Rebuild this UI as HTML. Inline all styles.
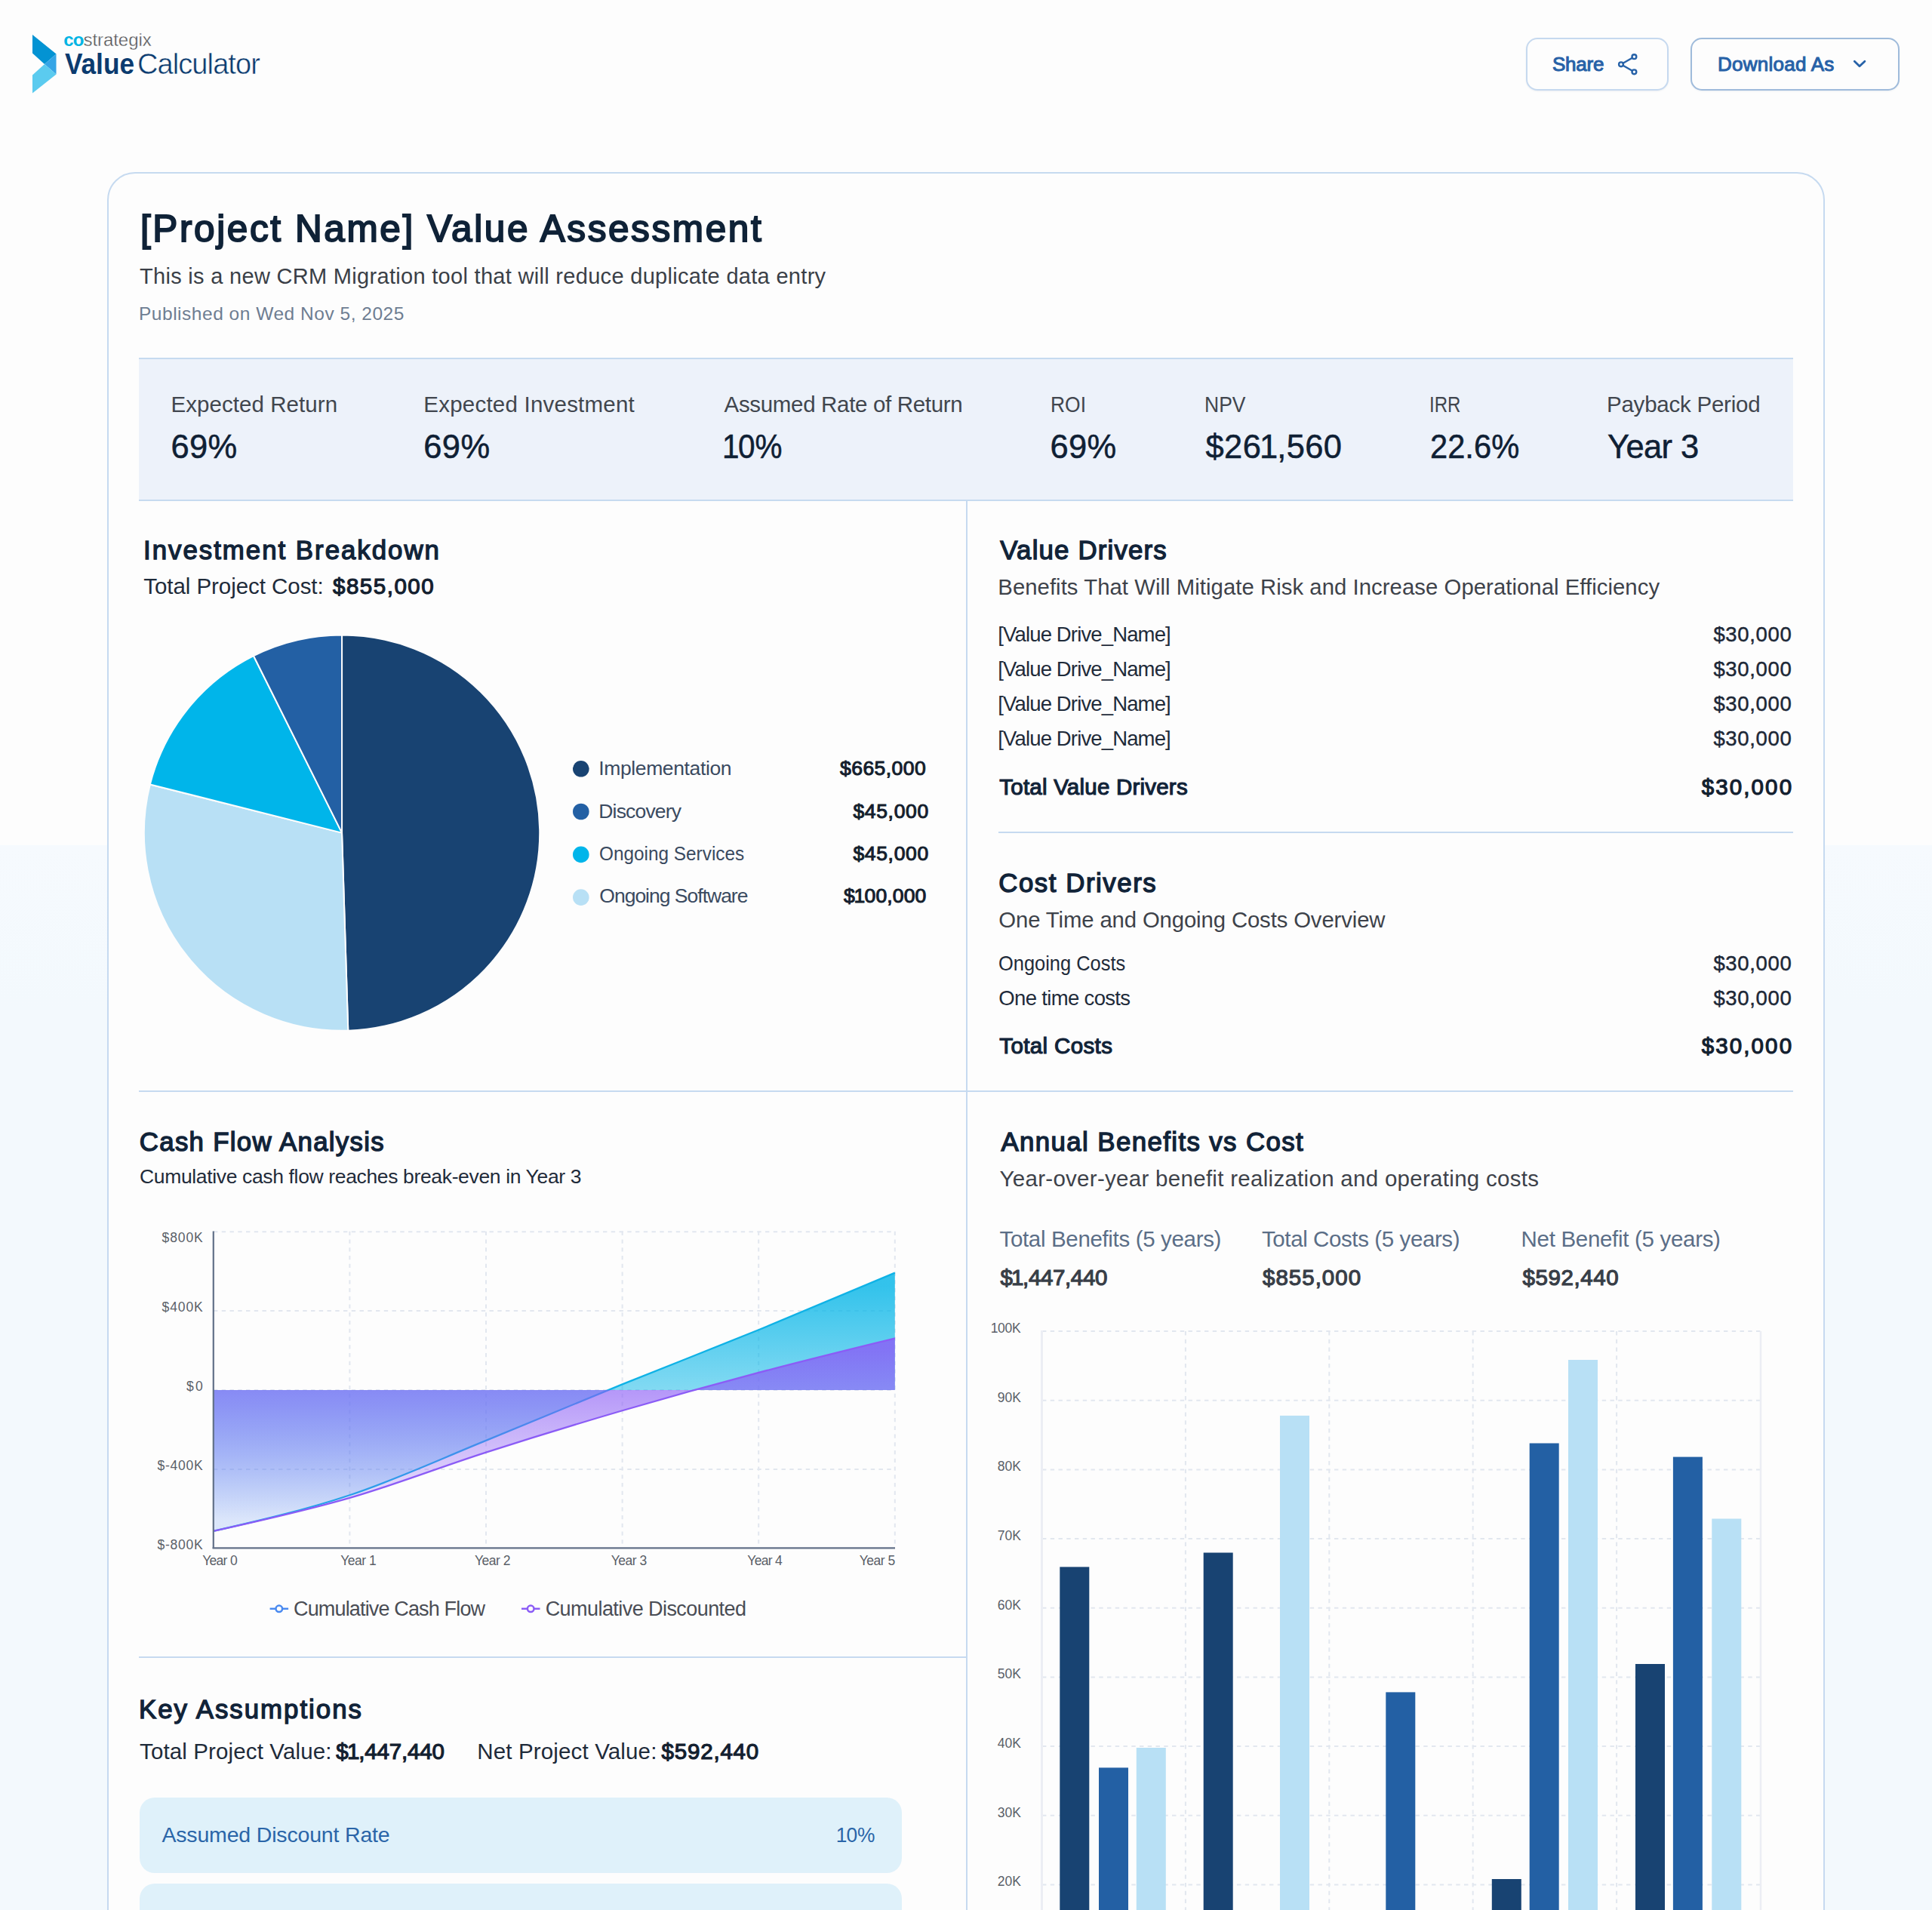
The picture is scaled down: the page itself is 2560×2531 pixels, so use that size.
<!DOCTYPE html>
<html><head><meta charset="utf-8"><title>Value Calculator</title>
<style>
html,body{margin:0;padding:0}
html{overflow:hidden;height:2531px;width:2560px}
body{width:2560px;height:2531px;overflow:hidden;position:relative;background:#fdfdfd;font-family:"Liberation Sans",sans-serif}
.bgl{position:absolute;left:0;top:1120px;width:2560px;height:1411px;background:linear-gradient(#f6fafe 0px,#f3f9fd 220px,#f3f9fd 100%)}
.page{position:relative;width:2560px;height:2531px;overflow:hidden}
.t{position:absolute;white-space:nowrap;line-height:1}
.abs{position:absolute}
.btn{position:absolute;box-sizing:border-box;border:2px solid #c6d9ef;border-radius:15px;background:#fdfdfd;box-shadow:0 1px 2px rgba(30,60,110,0.08)}
.card{position:absolute;left:142px;top:228px;width:2276px;height:2500px;box-sizing:border-box;border:2px solid #c6daf0;border-radius:37px;background:#fdfdfd}
.band{position:absolute;left:184px;top:474px;width:2192px;height:190px;box-sizing:border-box;background:#edf2fa;border-top:2px solid #c6daf0;border-bottom:2px solid #c6daf0}
.hl{position:absolute;height:2px;background:#c6daf0}
.vl{position:absolute;width:2px;background:#c6daf0}
.box{position:absolute;left:185px;width:1010px;border-radius:20px;background:#dff1fa}
svg{position:absolute;left:0;top:0;overflow:visible}
</style></head><body>
<div class="page">
<div class="bgl"></div>

<svg width="2560" height="2531" style="pointer-events:none">
<polygon points="43,46 74.5,71.5 59,85 43,70.5" fill="#0393d3"/>
<polygon points="74.5,71.5 74.5,98.5 59,85" fill="#35a5e6"/>
<polygon points="59,85 74.5,98.5 43,123.5 43,99.5" fill="#5bcbef"/>
</svg>
<div class="btn" style="left:2022px;top:50px;width:189px;height:70px"></div>
<div class="btn" style="left:2240px;top:50px;width:277px;height:70px;border-color:#9fbbdb"></div>
<svg width="2560" height="200">
<g fill="none" stroke="#2762a8" stroke-width="2.4" stroke-linecap="round">
<circle cx="2165.4" cy="75.2" r="2.9"/><circle cx="2148" cy="85.3" r="2.9"/><circle cx="2165.4" cy="95.3" r="2.9"/>
<line x1="2150.6" y1="83.8" x2="2162.8" y2="76.7"/><line x1="2150.6" y1="86.8" x2="2162.8" y2="93.8"/>
<polyline points="2457.3,81.3 2464,87.8 2470.9,81.3" stroke-width="2.8" stroke-linejoin="round"/>
</g></svg>
<div class="card"></div>
<div class="band"></div>
<div class="vl" style="left:1280px;top:664px;height:1900px"></div>
<div class="hl" style="left:184px;top:1445px;width:2192px"></div>
<div class="hl" style="left:1323px;top:1102px;width:1053px"></div>
<div class="hl" style="left:184px;top:2195px;width:1097px"></div>
<div class="box" style="top:2382px;height:100px"></div>
<div class="box" style="top:2496px;height:100px"></div>
<svg width="2560" height="2531"><path d="M453.05,1103.65L453.05,841.45A262.2,262.2 0 0 1 461.29,1365.72Z" fill="#184372" stroke="#fdfdfd" stroke-width="2" stroke-linejoin="round"/><path d="M453.05,1103.65L461.29,1365.72A262.2,262.2 0 0 1 198.83,1039.46Z" fill="#b8e0f5" stroke="#fdfdfd" stroke-width="2" stroke-linejoin="round"/><path d="M453.05,1103.65L198.83,1039.46A262.2,262.2 0 0 1 335.93,869.06Z" fill="#00b5ea" stroke="#fdfdfd" stroke-width="2" stroke-linejoin="round"/><path d="M453.05,1103.65L335.93,869.06A262.2,262.2 0 0 1 453.05,841.45Z" fill="#2360a4" stroke="#fdfdfd" stroke-width="2" stroke-linejoin="round"/><circle cx="769.8" cy="1018.8" r="10.8" fill="#184372"/><circle cx="769.8" cy="1075.5" r="10.8" fill="#2360a4"/><circle cx="769.8" cy="1132.4" r="10.8" fill="#00b5ea"/><circle cx="769.8" cy="1189.1" r="10.8" fill="#b8e0f5"/><g stroke="#e2e7ef" stroke-width="2" stroke-dasharray="5.4 5.35" fill="none"><line x1="283" y1="1632.2" x2="1186" y2="1632.2"/><line x1="283" y1="1737.1" x2="1186" y2="1737.1"/><line x1="283" y1="1842.0" x2="1186" y2="1842.0"/><line x1="283" y1="1946.9" x2="1186" y2="1946.9"/><line x1="463.4" y1="1631.7" x2="463.4" y2="2051"/><line x1="644.0" y1="1631.7" x2="644.0" y2="2051"/><line x1="824.6" y1="1631.7" x2="824.6" y2="2051"/><line x1="1005.2" y1="1631.7" x2="1005.2" y2="2051"/><line x1="1185.8" y1="1631.7" x2="1185.8" y2="2051"/></g><defs>
<linearGradient id="gc" x1="0" y1="0" x2="0" y2="1"><stop offset="5%" stop-color="#00b4e7" stop-opacity="0.8"/><stop offset="95%" stop-color="#00b4e7" stop-opacity="0.1"/></linearGradient>
<linearGradient id="gd" x1="0" y1="0" x2="0" y2="1"><stop offset="5%" stop-color="#8b5cf6" stop-opacity="0.8"/><stop offset="95%" stop-color="#8b5cf6" stop-opacity="0.1"/></linearGradient>
</defs><path d="M282.80,2028.95C343.00,2015.10,403.20,2001.24,463.40,1981.23C523.60,1961.21,583.80,1933.33,644.00,1908.86C704.20,1884.39,764.40,1858.82,824.60,1834.40C884.80,1809.97,945.00,1786.91,1005.20,1762.29C1065.40,1737.67,1125.60,1712.17,1185.80,1686.66L1185.80,1842.00L282.80,1842.00Z" fill="url(#gc)"/><path d="M282.80,2028.95C343.00,2015.10,403.20,2001.24,463.40,1981.23C523.60,1961.21,583.80,1933.33,644.00,1908.86C704.20,1884.39,764.40,1858.82,824.60,1834.40C884.80,1809.97,945.00,1786.91,1005.20,1762.29C1065.40,1737.67,1125.60,1712.17,1185.80,1686.66" fill="none" stroke="#0fb2e6" stroke-width="2.3"/><path d="M282.80,2028.95C343.00,2015.62,403.20,2002.29,463.40,1984.90C523.60,1967.51,583.80,1943.86,644.00,1924.59C704.20,1905.32,764.40,1886.88,824.60,1869.27C884.80,1851.66,945.00,1834.90,1005.20,1818.93C1065.40,1802.95,1125.60,1788.19,1185.80,1773.42L1185.80,1842.00L282.80,1842.00Z" fill="url(#gd)"/><path d="M282.80,2028.95C343.00,2015.62,403.20,2002.29,463.40,1984.90C523.60,1967.51,583.80,1943.86,644.00,1924.59C704.20,1905.32,764.40,1886.88,824.60,1869.27C884.80,1851.66,945.00,1834.90,1005.20,1818.93C1065.40,1802.95,1125.60,1788.19,1185.80,1773.42" fill="none" stroke="#8b5cf6" stroke-width="2.3"/><line x1="282.8" y1="1631.5" x2="282.8" y2="2052" stroke="#627188" stroke-width="2.2"/><line x1="281.6" y1="2051.3" x2="1186" y2="2051.3" stroke="#627188" stroke-width="2.2"/><line x1="357.6" y1="2131.8" x2="382.1" y2="2131.8" stroke="#4a8af0" stroke-width="2.5"/><circle cx="369.8" cy="2131.8" r="4.3" fill="#fdfdfd" stroke="#4a8af0" stroke-width="2.5"/><line x1="691" y1="2131.8" x2="715.5" y2="2131.8" stroke="#8b5cf6" stroke-width="2.5"/><circle cx="703.2" cy="2131.8" r="4.3" fill="#fdfdfd" stroke="#8b5cf6" stroke-width="2.5"/><g stroke="#e2e7ef" stroke-width="2" stroke-dasharray="5.4 5.35" fill="none"><line x1="1381" y1="1764.1" x2="2332.5" y2="1764.1"/><line x1="1381" y1="1855.8" x2="2332.5" y2="1855.8"/><line x1="1381" y1="1947.4" x2="2332.5" y2="1947.4"/><line x1="1381" y1="2039.1" x2="2332.5" y2="2039.1"/><line x1="1381" y1="2130.8" x2="2332.5" y2="2130.8"/><line x1="1381" y1="2222.5" x2="2332.5" y2="2222.5"/><line x1="1381" y1="2314.1" x2="2332.5" y2="2314.1"/><line x1="1381" y1="2405.8" x2="2332.5" y2="2405.8"/><line x1="1381" y1="2497.5" x2="2332.5" y2="2497.5"/><line x1="1570.9" y1="1764" x2="1570.9" y2="2531"/><line x1="1761.3" y1="1764" x2="1761.3" y2="2531"/><line x1="1951.7" y1="1764" x2="1951.7" y2="2531"/><line x1="2142.1" y1="1764" x2="2142.1" y2="2531"/></g><line x1="2333" y1="1764" x2="2333" y2="2531" stroke="#eceef4" stroke-width="2.5"/><line x1="1380.5" y1="1763" x2="1380.5" y2="2531" stroke="#eceef4" stroke-width="3"/><rect x="1404.3" y="2076.4" width="39" height="454.6" fill="#184372"/><rect x="1456.0" y="2342.4" width="39" height="188.6" fill="#2360a4"/><rect x="1505.8" y="2316.0" width="39" height="215.0" fill="#b8e0f5"/><rect x="1594.7" y="2057.5" width="39" height="473.5" fill="#184372"/><rect x="1696.0" y="1875.9" width="39" height="655.1" fill="#b8e0f5"/><rect x="1836.3" y="2242.4" width="39" height="288.6" fill="#2360a4"/><rect x="1976.8" y="2490.0" width="39" height="41.0" fill="#184372"/><rect x="2026.7" y="1912.5" width="39" height="618.5" fill="#2360a4"/><rect x="2078.0" y="1802.0" width="39" height="729.0" fill="#b8e0f5"/><rect x="2167.0" y="2205.0" width="39" height="326.0" fill="#184372"/><rect x="2216.9" y="1930.6" width="39" height="600.4" fill="#2360a4"/><rect x="2268.3" y="2012.5" width="39" height="518.5" fill="#b8e0f5"/></svg>
<div class="t" style="left:84.2px;top:40.6px;font-size:24px;font-weight:700;color:#00b4e4;letter-spacing:-0.8px">co</div>
<div class="t" style="left:110.5px;top:40.6px;font-size:24px;font-weight:400;color:#555558;letter-spacing:-0.062px;-webkit-text-stroke:0.35px #fdfdfd">strategix</div>
<div class="t" style="left:85.6px;top:65.7px;font-size:38px;font-weight:700;color:#0b3b6f;letter-spacing:0.0px;transform:scaleX(0.9265);transform-origin:0 0">Value</div>
<div class="t" style="left:182.0px;top:65.7px;font-size:38px;font-weight:400;color:#0b3b6f;letter-spacing:-0.911px;-webkit-text-stroke:0.5px #fdfdfd">Calculator</div>
<div class="t" style="left:2057.0px;top:72.4px;font-size:26px;font-weight:400;color:#2761a7;letter-spacing:-0.25px;-webkit-text-stroke:1.04px #2761a7">Share</div>
<div class="t" style="left:2276.0px;top:72.4px;font-size:26px;font-weight:400;color:#2761a7;letter-spacing:0.25px;-webkit-text-stroke:1.04px #2761a7">Download As</div>
<div class="t" style="left:186.0px;top:278.32px;font-size:49.5px;font-weight:400;color:#0f2237;letter-spacing:2.6px;-webkit-text-stroke:1.98px #0f2237">[Project Name] Value Assessment</div>
<div class="t" style="left:185.0px;top:352.15px;font-size:29px;font-weight:400;color:#3a3f47;letter-spacing:0.304px">This is a new CRM Migration tool that will reduce duplicate data entry</div>
<div class="t" style="left:184.0px;top:403.88px;font-size:24.5px;font-weight:400;color:#6e7d92;letter-spacing:0.519px">Published on Wed Nov 5, 2025</div>
<div class="t" style="left:226.4px;top:520.92px;font-size:29.5px;font-weight:400;color:#41464e;letter-spacing:0.071px">Expected Return</div>
<div class="t" style="left:226.4px;top:571.32px;font-size:43.5px;font-weight:400;color:#0f2034;letter-spacing:0.3px;-webkit-text-stroke:0.5px #0f2034">69%</div>
<div class="t" style="left:561.3px;top:520.92px;font-size:29.5px;font-weight:400;color:#41464e;letter-spacing:0.222px">Expected Investment</div>
<div class="t" style="left:561.3px;top:571.32px;font-size:43.5px;font-weight:400;color:#0f2034;letter-spacing:0.35px;-webkit-text-stroke:0.5px #0f2034">69%</div>
<div class="t" style="left:959.6px;top:520.92px;font-size:29.5px;font-weight:400;color:#41464e;letter-spacing:-0.333px">Assumed Rate of Return</div>
<div class="t" style="left:958.67px;top:571.32px;font-size:43.5px;font-weight:400;color:#0f2034;letter-spacing:0.0px;-webkit-text-stroke:0.5px #0f2034;transform:scaleX(0.9296);transform-origin:0 0"><span style="margin:0 -0.035em 0 -0.05em">1</span>0%</div>
<div class="t" style="left:1391.71px;top:520.92px;font-size:29.5px;font-weight:400;color:#41464e;letter-spacing:0.0px;transform:scaleX(0.8958);transform-origin:0 0">ROI</div>
<div class="t" style="left:1391.5px;top:571.32px;font-size:43.5px;font-weight:400;color:#0f2034;letter-spacing:0.35px;-webkit-text-stroke:0.5px #0f2034">69%</div>
<div class="t" style="left:1595.7px;top:520.92px;font-size:29.5px;font-weight:400;color:#41464e;letter-spacing:0.0px;transform:scaleX(0.8983);transform-origin:0 0">NPV</div>
<div class="t" style="left:1597.5px;top:571.32px;font-size:43.5px;font-weight:400;color:#0f2034;letter-spacing:0.386px;-webkit-text-stroke:0.5px #0f2034">$26<span style="margin:0 -0.035em 0 -0.05em">1</span>,560</div>
<div class="t" style="left:1894.35px;top:520.92px;font-size:29.5px;font-weight:400;color:#41464e;letter-spacing:0.0px;transform:scaleX(0.8152);transform-origin:0 0">IRR</div>
<div class="t" style="left:1894.88px;top:571.32px;font-size:43.5px;font-weight:400;color:#0f2034;letter-spacing:0.0px;-webkit-text-stroke:0.5px #0f2034;transform:scaleX(0.9583);transform-origin:0 0">22.6%</div>
<div class="t" style="left:2129.0px;top:520.92px;font-size:29.5px;font-weight:400;color:#41464e;letter-spacing:-0.231px">Payback Period</div>
<div class="t" style="left:2130.0px;top:571.32px;font-size:43.5px;font-weight:400;color:#0f2034;letter-spacing:-0.6px;-webkit-text-stroke:0.5px #0f2034">Year 3</div>
<div class="t" style="left:190.0px;top:712.12px;font-size:34.8px;font-weight:400;color:#112338;letter-spacing:2.0px;-webkit-text-stroke:1.39px #112338">Investment Breakdown</div>
<div class="t" style="left:190.3px;top:762.32px;font-size:29.5px;font-weight:400;color:#1f2b3a;letter-spacing:-0.056px">Total Project Cost:</div>
<div class="t" style="left:441.0px;top:762.32px;font-size:29.5px;font-weight:400;color:#13202f;letter-spacing:1.514px;-webkit-text-stroke:1.18px #13202f">$855,000</div>
<div class="t" style="left:793.3px;top:1004.77px;font-size:26.5px;font-weight:400;color:#3a4a60;letter-spacing:-0.385px">Implementation</div>
<div class="t" style="left:1113.1px;top:1004.77px;font-size:26.5px;font-weight:400;color:#141e2d;letter-spacing:0.429px;-webkit-text-stroke:1.06px #141e2d">$665,000</div>
<div class="t" style="left:793.3px;top:1061.77px;font-size:26.5px;font-weight:400;color:#3a4a60;letter-spacing:-0.825px">Discovery</div>
<div class="t" style="left:1130.4px;top:1061.77px;font-size:26.5px;font-weight:400;color:#141e2d;letter-spacing:0.667px;-webkit-text-stroke:1.06px #141e2d">$45,000</div>
<div class="t" style="left:794.38px;top:1118.17px;font-size:26.5px;font-weight:400;color:#3a4a60;letter-spacing:0.0px;transform:scaleX(0.9188);transform-origin:0 0">Ongoing Services</div>
<div class="t" style="left:1130.4px;top:1118.17px;font-size:26.5px;font-weight:400;color:#141e2d;letter-spacing:0.667px;-webkit-text-stroke:1.06px #141e2d">$45,000</div>
<div class="t" style="left:794.3px;top:1174.38px;font-size:26.5px;font-weight:400;color:#3a4a60;letter-spacing:-1.0px">Ongoing Software</div>
<div class="t" style="left:1118.0px;top:1174.38px;font-size:26.5px;font-weight:400;color:#141e2d;letter-spacing:0.143px;-webkit-text-stroke:1.06px #141e2d">$<span style="margin:0 -0.035em 0 -0.05em">1</span>00,000</div>
<div class="t" style="left:1325.3px;top:711.82px;font-size:34.8px;font-weight:400;color:#112338;letter-spacing:1.183px;-webkit-text-stroke:1.39px #112338">Value Drivers</div>
<div class="t" style="left:1322.3px;top:763.0px;font-size:29.3px;font-weight:400;color:#3d424a;letter-spacing:0.051px">Benefits That Will Mitigate Risk and Increase Operational Efficiency</div>
<div class="t" style="left:1322.3px;top:826.92px;font-size:27.5px;font-weight:400;color:#1f2b3a;letter-spacing:-0.859px">[Value Drive_Name]</div>
<div class="t" style="left:2270.4px;top:826.92px;font-size:27.5px;font-weight:400;color:#1c2736;letter-spacing:0.667px;-webkit-text-stroke:0.45px #1c2736">$30,000</div>
<div class="t" style="left:1322.3px;top:872.92px;font-size:27.5px;font-weight:400;color:#1f2b3a;letter-spacing:-0.859px">[Value Drive_Name]</div>
<div class="t" style="left:2270.4px;top:872.92px;font-size:27.5px;font-weight:400;color:#1c2736;letter-spacing:0.667px;-webkit-text-stroke:0.45px #1c2736">$30,000</div>
<div class="t" style="left:1322.3px;top:918.92px;font-size:27.5px;font-weight:400;color:#1f2b3a;letter-spacing:-0.859px">[Value Drive_Name]</div>
<div class="t" style="left:2270.4px;top:918.92px;font-size:27.5px;font-weight:400;color:#1c2736;letter-spacing:0.667px;-webkit-text-stroke:0.45px #1c2736">$30,000</div>
<div class="t" style="left:1322.3px;top:965.02px;font-size:27.5px;font-weight:400;color:#1f2b3a;letter-spacing:-0.859px">[Value Drive_Name]</div>
<div class="t" style="left:2270.4px;top:965.02px;font-size:27.5px;font-weight:400;color:#1c2736;letter-spacing:0.667px;-webkit-text-stroke:0.45px #1c2736">$30,000</div>
<div class="t" style="left:1324.3px;top:1027.83px;font-size:29.5px;font-weight:400;color:#112338;letter-spacing:0.222px;-webkit-text-stroke:1.18px #112338">Total Value Drivers</div>
<div class="t" style="left:2254.8px;top:1027.83px;font-size:29.5px;font-weight:400;color:#13202f;letter-spacing:2.1px;-webkit-text-stroke:1.18px #13202f">$30,000</div>
<div class="t" style="left:1323.3px;top:1153.02px;font-size:34.8px;font-weight:400;color:#112338;letter-spacing:1.545px;-webkit-text-stroke:1.39px #112338">Cost Drivers</div>
<div class="t" style="left:1323.3px;top:1204.1px;font-size:29.3px;font-weight:400;color:#3d424a;letter-spacing:-0.118px">One Time and Ongoing Costs Overview</div>
<div class="t" style="left:1323.38px;top:1262.62px;font-size:27.5px;font-weight:400;color:#1f2b3a;letter-spacing:0.0px;transform:scaleX(0.9244);transform-origin:0 0">Ongoing Costs</div>
<div class="t" style="left:2270.4px;top:1262.62px;font-size:27.5px;font-weight:400;color:#1c2736;letter-spacing:0.667px;-webkit-text-stroke:0.45px #1c2736">$30,000</div>
<div class="t" style="left:1323.3px;top:1308.83px;font-size:27.5px;font-weight:400;color:#1f2b3a;letter-spacing:-0.662px">One time costs</div>
<div class="t" style="left:2270.4px;top:1308.83px;font-size:27.5px;font-weight:400;color:#1c2736;letter-spacing:0.667px;-webkit-text-stroke:0.45px #1c2736">$30,000</div>
<div class="t" style="left:1324.3px;top:1371.12px;font-size:29.5px;font-weight:400;color:#112338;letter-spacing:0.37px;-webkit-text-stroke:1.18px #112338">Total Costs</div>
<div class="t" style="left:2254.8px;top:1371.12px;font-size:29.5px;font-weight:400;color:#13202f;letter-spacing:2.1px;-webkit-text-stroke:1.18px #13202f">$30,000</div>
<div class="t" style="left:184.8px;top:1496.02px;font-size:34.8px;font-weight:400;color:#112338;letter-spacing:1.306px;-webkit-text-stroke:1.39px #112338">Cash Flow Analysis</div>
<div class="t" style="left:185.0px;top:1545.77px;font-size:26.5px;font-weight:400;color:#1f2b3a;letter-spacing:-0.354px">Cumulative cash flow reaches break-even in Year 3</div>
<div class="t" style="left:184.0px;top:2247.92px;font-size:34.8px;font-weight:400;color:#112338;letter-spacing:2.0px;-webkit-text-stroke:1.39px #112338">Key Assumptions</div>
<div class="t" style="left:185.0px;top:2305.93px;font-size:29.5px;font-weight:400;color:#1f2b3a;letter-spacing:0.132px">Total Project Value:</div>
<div class="t" style="left:445.2px;top:2305.93px;font-size:29.5px;font-weight:400;color:#13202f;letter-spacing:-0.167px;-webkit-text-stroke:1.18px #13202f">$<span style="margin:0 -0.035em 0 -0.05em">1</span>,447,440</div>
<div class="t" style="left:632.3px;top:2305.93px;font-size:29.5px;font-weight:400;color:#1f2b3a;letter-spacing:0.147px">Net Project Value:</div>
<div class="t" style="left:876.5px;top:2305.93px;font-size:29.5px;font-weight:400;color:#13202f;letter-spacing:0.814px;-webkit-text-stroke:1.18px #13202f">$592,440</div>
<div class="t" style="left:214.4px;top:2416.78px;font-size:28.5px;font-weight:400;color:#2a65a8;letter-spacing:-0.17px">Assumed Discount Rate</div>
<div class="t" style="left:1109.08px;top:2416.78px;font-size:28.5px;font-weight:400;color:#2a65a8;letter-spacing:0.0px;transform:scaleX(0.9245);transform-origin:0 0"><span style="margin:0 -0.035em 0 -0.05em">1</span>0%</div>
<div class="t" style="left:1326.5px;top:1496.22px;font-size:34.8px;font-weight:400;color:#112338;letter-spacing:1.4px;-webkit-text-stroke:1.39px #112338">Annual Benefits vs Cost</div>
<div class="t" style="left:1324.5px;top:1547.33px;font-size:29.5px;font-weight:400;color:#3d424a;letter-spacing:0.291px">Year-over-year benefit realization and operating costs</div>
<div class="t" style="left:1324.5px;top:1627.42px;font-size:29.5px;font-weight:400;color:#5b6e87;letter-spacing:-0.339px">Total Benefits (5 years)</div>
<div class="t" style="left:1325.5px;top:1678.02px;font-size:29.5px;font-weight:400;color:#383e47;letter-spacing:-0.367px;-webkit-text-stroke:1.18px #383e47">$<span style="margin:0 -0.035em 0 -0.05em">1</span>,447,440</div>
<div class="t" style="left:1672.0px;top:1627.42px;font-size:29.5px;font-weight:400;color:#5b6e87;letter-spacing:-0.4px">Total Costs (5 years)</div>
<div class="t" style="left:1673.0px;top:1678.02px;font-size:29.5px;font-weight:400;color:#383e47;letter-spacing:1.0px;-webkit-text-stroke:1.18px #383e47">$855,000</div>
<div class="t" style="left:2015.6px;top:1627.42px;font-size:29.5px;font-weight:400;color:#5b6e87;letter-spacing:-0.31px">Net Benefit (5 years)</div>
<div class="t" style="left:2017.6px;top:1678.02px;font-size:29.5px;font-weight:400;color:#383e47;letter-spacing:0.557px;-webkit-text-stroke:1.18px #383e47">$592,440</div>
<div class="t" style="left:214.6px;top:1632.03px;font-size:17.5px;font-weight:400;color:#5a5f68;letter-spacing:0.9px">$800K</div>
<div class="t" style="left:214.6px;top:1724.12px;font-size:17.5px;font-weight:400;color:#5a5f68;letter-spacing:0.9px">$400K</div>
<div class="t" style="left:247.0px;top:1829.33px;font-size:17.5px;font-weight:400;color:#5a5f68;letter-spacing:2.2px">$0</div>
<div class="t" style="left:208.4px;top:1934.12px;font-size:17.5px;font-weight:400;color:#5a5f68;letter-spacing:0.76px">$-400K</div>
<div class="t" style="left:208.4px;top:2038.82px;font-size:17.5px;font-weight:400;color:#5a5f68;letter-spacing:0.76px">$-800K</div>
<div class="t" style="left:268.2px;top:2060.43px;font-size:17.5px;font-weight:400;color:#5a5f68;letter-spacing:-0.7px">Year 0</div>
<div class="t" style="left:451.3px;top:2060.43px;font-size:17.5px;font-weight:400;color:#5a5f68;letter-spacing:-0.5px">Year 1</div>
<div class="t" style="left:629.0px;top:2060.43px;font-size:17.5px;font-weight:400;color:#5a5f68;letter-spacing:-0.5px">Year 2</div>
<div class="t" style="left:809.8px;top:2060.43px;font-size:17.5px;font-weight:400;color:#5a5f68;letter-spacing:-0.5px">Year 3</div>
<div class="t" style="left:990.3px;top:2060.43px;font-size:17.5px;font-weight:400;color:#5a5f68;letter-spacing:-0.7px">Year 4</div>
<div class="t" style="left:1138.8px;top:2060.43px;font-size:17.5px;font-weight:400;color:#5a5f68;letter-spacing:-0.5px">Year 5</div>
<div class="t" style="left:389.0px;top:2119.05px;font-size:27px;font-weight:400;color:#4a4d55;letter-spacing:-0.842px">Cumulative Cash Flow</div>
<div class="t" style="left:722.7px;top:2119.05px;font-size:27px;font-weight:400;color:#4a4d55;letter-spacing:-0.565px">Cumulative Discounted</div>
<div class="t" style="left:1312.7px;top:1751.92px;font-size:17.5px;font-weight:400;color:#5a5f68;letter-spacing:-0.333px">100K</div>
<div class="t" style="left:1321.7px;top:1843.6px;font-size:17.5px;font-weight:400;color:#5a5f68;letter-spacing:0.0px">90K</div>
<div class="t" style="left:1321.7px;top:1935.27px;font-size:17.5px;font-weight:400;color:#5a5f68;letter-spacing:0.0px">80K</div>
<div class="t" style="left:1321.7px;top:2026.95px;font-size:17.5px;font-weight:400;color:#5a5f68;letter-spacing:0.0px">70K</div>
<div class="t" style="left:1321.7px;top:2118.62px;font-size:17.5px;font-weight:400;color:#5a5f68;letter-spacing:0.0px">60K</div>
<div class="t" style="left:1321.7px;top:2210.3px;font-size:17.5px;font-weight:400;color:#5a5f68;letter-spacing:0.0px">50K</div>
<div class="t" style="left:1321.7px;top:2301.97px;font-size:17.5px;font-weight:400;color:#5a5f68;letter-spacing:0.0px">40K</div>
<div class="t" style="left:1321.7px;top:2393.65px;font-size:17.5px;font-weight:400;color:#5a5f68;letter-spacing:0.0px">30K</div>
<div class="t" style="left:1321.7px;top:2485.32px;font-size:17.5px;font-weight:400;color:#5a5f68;letter-spacing:0.0px">20K</div>
</div></body></html>
